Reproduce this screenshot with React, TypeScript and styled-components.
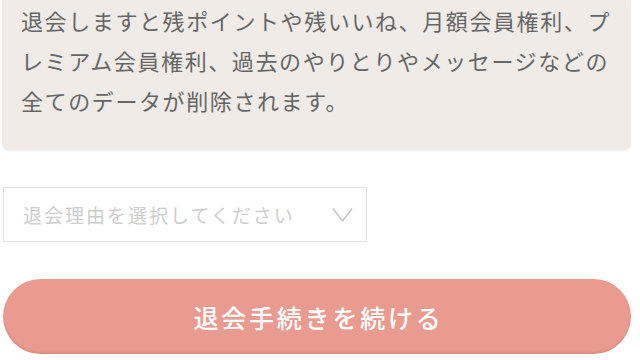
import React from "react";
import styled, { createGlobalStyle } from "styled-components";

const GlobalStyle = createGlobalStyle`
  html, body {
    margin: 0;
    padding: 0;
    background: #ffffff;
  }
  body {
    font-family: "Noto Sans CJK JP", "Noto Sans", sans-serif;
  }
`;

const Page = styled.div`
  width: 640px;
  height: 360px;
  overflow: hidden;
  display: flex;
  flex-direction: column;
  padding: 0 9px 0 2px;
  box-sizing: border-box;
`;

const NoticeBox = styled.div`
  background: #f0ebe6;
  border-radius: 0 0 7px 7px;
  padding: 0 14px 30px 19px;
  box-shadow: 0 1px 2px rgba(0, 0, 0, 0.06);
`;

const NoticeText = styled.p`
  margin: 0;
  font-size: 22px;
  letter-spacing: 1.6px;
  line-height: 40px;
  color: #666666;
  line-break: strict;
`;

const SelectBox = styled.div`
  margin-top: 37px;
  margin-left: 1px;
  width: 364px;
  height: 55px;
  box-sizing: border-box;
  border: 1px solid #e4e2df;
  display: flex;
  align-items: center;
  justify-content: space-between;
  padding: 0 13px 0 19px;
  background: #fff;
`;

const Placeholder = styled.span`
  font-size: 19px;
  letter-spacing: 2px;
  color: #cdcdcd;
  white-space: nowrap;
`;

const Chevron = styled.svg`
  width: 21px;
  height: 16px;
  flex-shrink: 0;
`;

const SubmitButton = styled.button`
  margin-top: 37px;
  margin-left: 1px;
  width: 628px;
  height: 75px;
  border: none;
  border-radius: 38px;
  background: #e99b90;
  box-shadow: inset 0 -2px 2px rgba(170, 90, 80, 0.18);
  color: #ffffff;
  font-family: "Noto Sans CJK JP", "Noto Sans", sans-serif;
  font-size: 25px;
  font-weight: 500;
  letter-spacing: 2.8px;
  display: flex;
  align-items: center;
  justify-content: center;
  padding: 0 0 0 3px;
  cursor: pointer;
`;

export default function App() {
  return (
    <>
      <GlobalStyle />
      <Page>
        <NoticeBox>
          <NoticeText>
            退会しますと残ポイントや残いいね、月額会員権利、プレミアム会員権利、過去のやりとりやメッセージなどの全てのデータが削除されます。
          </NoticeText>
        </NoticeBox>
        <SelectBox>
          <Placeholder>退会理由を選択してください</Placeholder>
          <Chevron viewBox="0 0 21 16">
            <path d="M1 1.5 L10.5 14 L20 1.5" fill="none" stroke="#c4c4c4" strokeWidth="1.4" />
          </Chevron>
        </SelectBox>
        <SubmitButton>退会手続きを続ける</SubmitButton>
      </Page>
    </>
  );
}
